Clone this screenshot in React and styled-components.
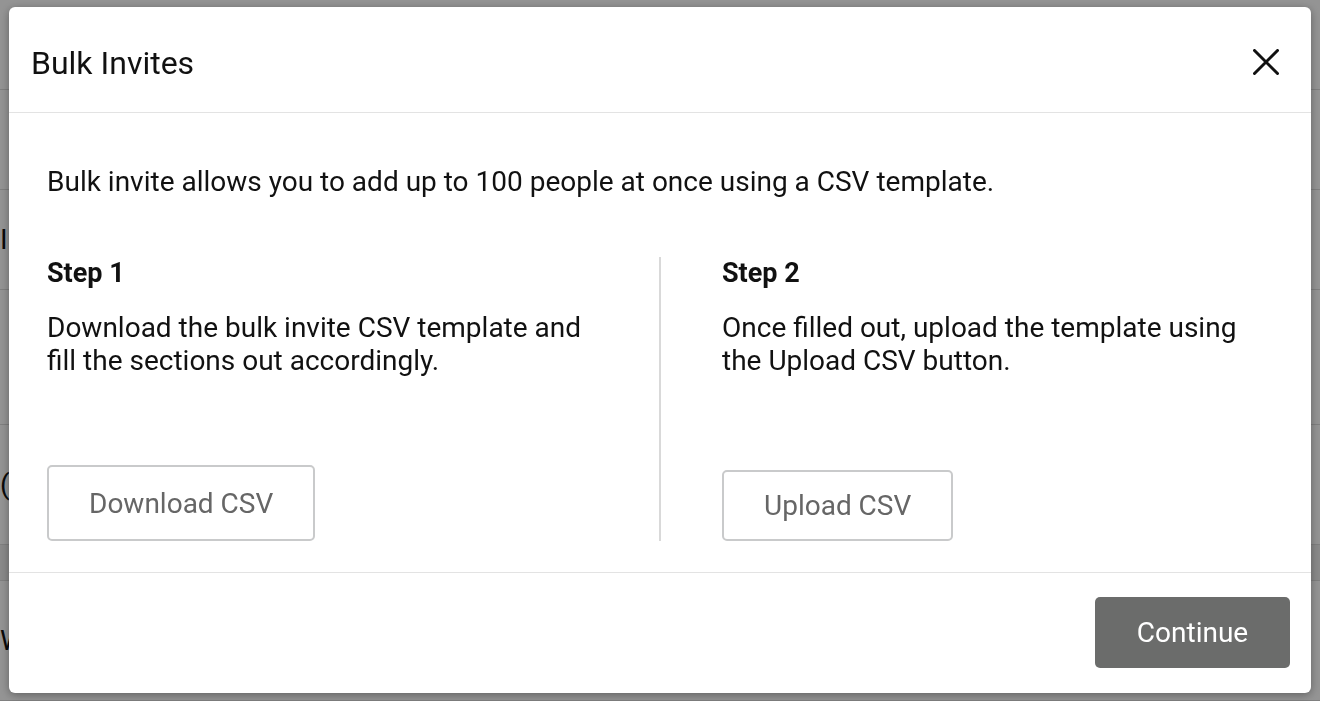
import React from "react";
import styled, { createGlobalStyle } from "styled-components";

const Global = createGlobalStyle`
  html, body { margin: 0; padding: 0; }
  body {
    width: 1320px;
    height: 701px;
    overflow: hidden;
    background: #ffffff;
    font-family: Roboto, "Liberation Sans", Arial, sans-serif;
  }
  * { box-sizing: border-box; }
`;

const Page = styled.div`
  width: 1320px;
  height: 701px;
  display: flex;
  flex-direction: column;
  background: #ffffff;
`;

const PageRow = styled.div`
  height: ${(p) => p.$h}px;
  border-bottom: 1px solid #dcdcdc;
  background: ${(p) => p.$bg || "#ffffff"};
  display: flex;
  align-items: center;
  font-size: 28px;
  color: #111;
  overflow: hidden;
`;

const Overlay = styled.div`
  position: fixed;
  inset: 0;
  background: rgba(0, 0, 0, 0.42);
  display: flex;
  padding: 7px 9px 8px 9px;
`;

const Modal = styled.div`
  flex: 1;
  background: #ffffff;
  border-radius: 6px;
  box-shadow: 0 2px 10px rgba(0, 0, 0, 0.35);
  display: flex;
  flex-direction: column;
  overflow: hidden;
`;

const Header = styled.div`
  height: 106px;
  border-bottom: 1px solid #e3e3e3;
  display: flex;
  align-items: center;
  justify-content: space-between;
  padding: 0 31px 0 22px;
`;

const Title = styled.h2`
  margin: 0;
  font-weight: 400;
  font-size: 32px;
  color: #111;
  padding-top: 6px;
`;

const CloseButton = styled.button`
  width: 28px;
  height: 28px;
  border: none;
  background: none;
  padding: 0;
  display: flex;
  align-items: center;
  justify-content: center;
  cursor: pointer;
  margin-top: 4px;
`;

const Body = styled.div`
  flex: 1;
  padding: 52px 37px 31px 38px;
  border-bottom: 1px solid #e3e3e3;
  display: flex;
  flex-direction: column;
`;

const Intro = styled.p`
  margin: 0 0 59px 0;
  font-size: 28px;
  line-height: 33px;
  color: #111;
`;

const Columns = styled.div`
  flex: 1;
  display: grid;
  grid-template-columns: 612px 1fr;
`;

const Column = styled.div`
  display: flex;
  flex-direction: column;
  padding-left: ${(p) => (p.$divided ? "61px" : "0")};
  border-left: ${(p) => (p.$divided ? "2px solid #d9d9d9" : "none")};
`;

const StepTitle = styled.h3`
  margin: 1px 0 23px 0;
  font-size: 27px;
  line-height: 30px;
  font-weight: 700;
  color: #111;
`;

const StepText = styled.p`
  margin: 0;
  font-size: 28px;
  line-height: 33px;
  color: #111;
  flex: 1;
`;

const OutlineButton = styled.button`
  align-self: flex-start;
  height: ${(p) => p.$h}px;
  padding: 0 ${(p) => p.$px}px;
  border: 2px solid #c9cacb;
  border-radius: 5px;
  background: #ffffff;
  font-family: Roboto, "Liberation Sans", Arial, sans-serif;
  font-size: 28px;
  color: #666666;
  cursor: pointer;
`;

const Footer = styled.div`
  height: 120px;
  display: flex;
  align-items: flex-start;
  justify-content: flex-end;
  padding: 24px 21px 0 0;
`;

const PrimaryButton = styled.button`
  width: 195px;
  height: 71px;
  border: none;
  border-radius: 5px;
  background: #6b6c6b;
  color: #ffffff;
  font-family: Roboto, "Liberation Sans", Arial, sans-serif;
  font-size: 28px;
  cursor: pointer;
`;

export default function App() {
  return (
    <>
      <Global />
      <Page>
        <PageRow $h={90} />
        <PageRow $h={100} />
        <PageRow $h={100}>I</PageRow>
        <PageRow $h={135} />
        <PageRow $h={120}>(</PageRow>
        <PageRow $h={36} $bg="#eeeeee" />
        <PageRow $h={120}>W</PageRow>
      </Page>
      <Overlay>
        <Modal role="dialog" aria-label="Bulk Invites">
          <Header>
            <Title>Bulk Invites</Title>
            <CloseButton aria-label="Close">
              <svg width="26" height="26" viewBox="0 0 26 26">
                <path
                  d="M1.5 1.5 L24.5 24.5 M24.5 1.5 L1.5 24.5"
                  stroke="#111"
                  strokeWidth="3"
                  strokeLinecap="round"
                />
              </svg>
            </CloseButton>
          </Header>
          <Body>
            <Intro>
              Bulk invite allows you to add up to 100 people at once using a CSV
              template.
            </Intro>
            <Columns>
              <Column>
                <StepTitle>Step 1</StepTitle>
                <StepText>
                  Download the bulk invite CSV template and
                  <br />
                  fill the sections out accordingly.
                </StepText>
                <OutlineButton $h={76} $px={40}>
                  Download CSV
                </OutlineButton>
              </Column>
              <Column $divided>
                <StepTitle>Step 2</StepTitle>
                <StepText>
                  Once filled out, upload the template using
                  <br />
                  the Upload CSV button.
                </StepText>
                <OutlineButton $h={71} $px={40}>
                  Upload CSV
                </OutlineButton>
              </Column>
            </Columns>
          </Body>
          <Footer>
            <PrimaryButton>Continue</PrimaryButton>
          </Footer>
        </Modal>
      </Overlay>
    </>
  );
}
